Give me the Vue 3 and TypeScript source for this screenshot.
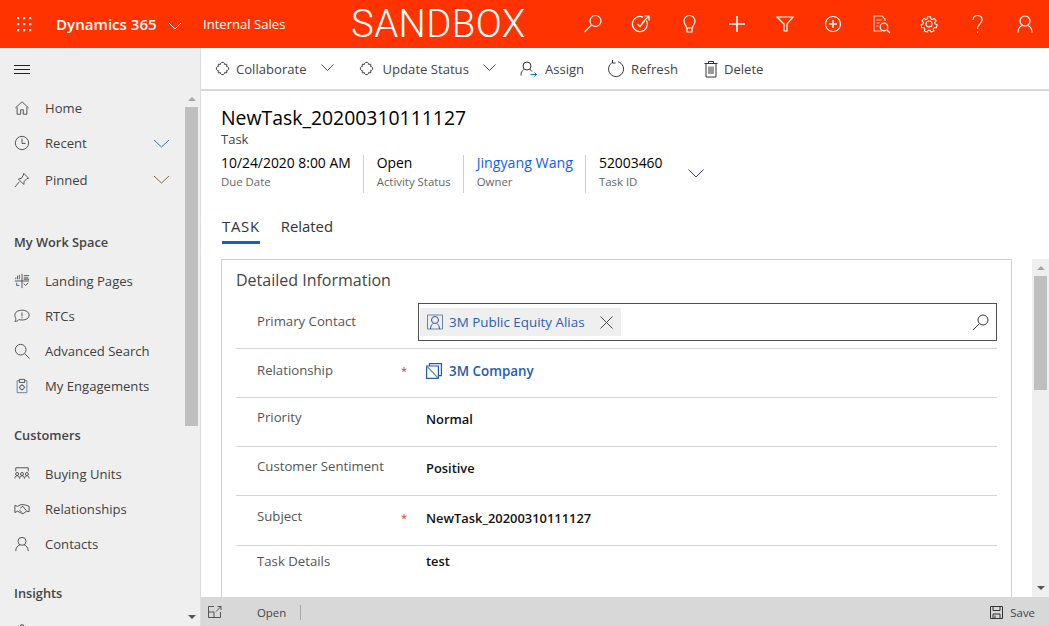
<template>
  <div class="app">
    <header class="topbar">
      <svg class="waffle" width="16" height="16" viewBox="0 0 16 16" fill="#fff">
        <template v-for="y in [1, 7, 13]" :key="y">
          <rect v-for="x in [1, 7, 13]" :key="x" :x="x" :y="y" width="2.2" height="2.2" />
        </template>
      </svg>
      <span class="brand">Dynamics 365</span>
      <svg class="brand-chev" width="14" height="8" viewBox="0 0 14 8" fill="none" stroke="#fff"><path d="M1 1l6 6 6-6" /></svg>
      <span class="app-name">Internal Sales</span>
      <span class="sandbox">SANDBOX</span>
      <div class="top-icons">
        <span class="top-icon">
          <svg viewBox="0 0 20 20"><circle cx="12.5" cy="7" r="5.5" /><path d="M8.5 11l-7 7" /></svg>
        </span>
        <span class="top-icon">
          <svg viewBox="0 0 20 20"><path d="M15.5 6.5A7.5 7.5 0 1 1 12 3.2" /><path d="M6.5 10l2.5 2.5L13.5 7" /><path d="M11 9l7-7M13.5 2H18v4.5" /></svg>
        </span>
        <span class="top-icon">
          <svg viewBox="0 0 20 20"><path d="M7.5 14c0-3-2.5-3.5-2.5-7a5.5 5.5 0 0 1 11 0c0 3.5-2.5 4-2.5 7z" /><path d="M8 14v4h5v-4" /></svg>
        </span>
        <span class="top-icon">
          <svg viewBox="0 0 20 20"><path d="M10 2v16M2 10h16" stroke-width="1.6" /></svg>
        </span>
        <span class="top-icon">
          <svg viewBox="0 0 20 20"><path d="M2 3h16l-6 7v7H9v-7z" /></svg>
        </span>
        <span class="top-icon">
          <svg viewBox="0 0 20 20"><circle cx="10" cy="10" r="7.5" /><path d="M10 6v8M6 10h8" stroke-width="1.4" /></svg>
        </span>
        <span class="top-icon">
          <svg viewBox="0 0 20 20"><path d="M11 17H3V2h8l3 3v2" opacity=".75" /><path d="M5.5 6h5M5.5 9h3M5.5 12h2" opacity=".75" /><circle cx="13" cy="13" r="3.8" /><path d="M16 16l3 3" /></svg>
        </span>
        <span class="top-icon">
          <svg viewBox="0 0 20 20"><path d="M8.3 2h3.4l.5 2.4 1.5.7 2.2-1.2 2 2.4-1.500 2 .4 1.600 2.200 1-.7 3.200-2.500-.1-1 1.300.6 2.400-3 1.300-1.400-2H9.200l-1.400 2-3-1.300.6-2.400-1-1.300-2.500.1-.7-3.200 2.200-1 .4-1.600-1.500-2 2-2.400 2.200 1.200 1.500-.7z" transform="translate(1 1) scale(.9)" /><circle cx="10" cy="10" r="3" /></svg>
        </span>
        <span class="top-icon">
          <svg viewBox="0 0 20 20"><path d="M6 6c0-6 9-6 9 0 0 4-4.5 4-4.5 9" /><path d="M10.5 17.5v1.200" /></svg>
        </span>
        <span class="top-icon">
          <svg viewBox="0 0 20 20"><circle cx="10" cy="7" r="5" /><path d="M3 18.5c0-5 3-6.500 4-7M17 18.500c0-5-3-6.500-4-7" /></svg>
        </span>
      </div>
    </header>

    <div class="body">
      <aside class="sidebar">
        <div class="hamburger">
          <svg width="16" height="10" viewBox="0 0 16 10" stroke="#222"><path d="M0 .5h16M0 4.500h16M0 8.500h16" /></svg>
        </div>
        <div class="nav-wrap">
          <nav class="nav">
            <div class="nav-item home">
              <svg class="nav-icon" viewBox="0 0 18 18"><path d="M1.5 9L9 2l7.5 7M3.5 8v8h4v-5h3v5h4V8" /></svg>
              <span>Home</span>
            </div>
            <div class="nav-item recent">
              <svg class="nav-icon" viewBox="0 0 18 18"><circle cx="9" cy="9" r="7.5" /><path d="M9 4v5.500h4" /></svg>
              <span>Recent</span>
              <svg class="nav-chev" width="17" height="9" viewBox="0 0 17 9"><path d="M1 1l7.5 7L16 1" /></svg>
            </div>
            <div class="nav-item pinned">
              <svg class="nav-icon" viewBox="0 0 18 18"><path d="M11 1.500l5.500 5.500-2 .5-3 3-.5 3.500-6-6L8.500 7l2-3.500zM6 11l-5 6" /></svg>
              <span>Pinned</span>
              <svg class="nav-chev" width="17" height="9" viewBox="0 0 17 9"><path d="M1 1l7.500 7L16 1" /></svg>
            </div>

            <div class="nav-head workspace">My Work Space</div>
            <div class="nav-item">
              <svg class="nav-icon" viewBox="0 0 18 18"><path d="M9 1v16M1 9h16M11 3h6M11 5.500h5M11 7h6M11 12l2 2 3-3" /><path d="M2 7V5M4 7V3M6 7V2M3 11v3h3" stroke="#2b579a" /></svg>
              <span>Landing Pages</span>
            </div>
            <div class="nav-item">
              <svg class="nav-icon" viewBox="0 0 18 18"><path d="M1 15c1.200-1.500 1-2.500 1-3.500C1 10 1 9 1 8c0-3.500 3.500-5.500 8-5.500S17 4.500 17 8s-3.500 5.500-8 5.500c-1.500 0-2.500-.2-3.500-.5-1 1.500-2.500 2-4.500 2z" /><path d="M9 5v4.500M9 10.500v1.200" /></svg>
              <span>RTCs</span>
            </div>
            <div class="nav-item">
              <svg class="nav-icon" viewBox="0 0 18 18"><circle cx="7.5" cy="7.5" r="6" /><path d="M12 12l5.500 5.500" /></svg>
              <span>Advanced Search</span>
            </div>
            <div class="nav-item">
              <svg class="nav-icon" viewBox="0 0 18 18"><path d="M6 3H3.500v13.500h11V3H12" stroke="#5b7b9a" /><path d="M6 1.500h6V5H6z" /><circle cx="9" cy="10.500" r="2.500" /><path d="M9 7v1M9 13v1M5.500 10.500h1M11.500 10.500h1" /></svg>
              <span>My Engagements</span>
            </div>

            <div class="nav-head customers">Customers</div>
            <div class="nav-item">
              <svg class="nav-icon" viewBox="0 0 18 18"><path d="M2 6V2h14v4" /><circle cx="3.500" cy="9" r="1.700" /><circle cx="9" cy="9" r="1.700" /><circle cx="14.500" cy="9" r="1.700" /><path d="M1 14c0-2 1-3 2.500-3S6 12 6 14M6.500 14c0-2 1-3 2.500-3s2.500 1 2.500 3M12 14c0-2 1-3 2.500-3s2.500 1 2.500 3" /></svg>
              <span>Buying Units</span>
            </div>
            <div class="nav-item">
              <svg class="nav-icon" viewBox="0 0 18 18"><path d="M1 5l3 1 4-2 5 .5L17 6v6l-3-.5-4 3-3-1.500L4 11.500 1 13z" /><path d="M7 8l3-2 4 5M9 13l-3-3" /></svg>
              <span>Relationships</span>
            </div>
            <div class="nav-item">
              <svg class="nav-icon" viewBox="0 0 18 18"><circle cx="9" cy="6" r="4.500" /><path d="M2 17c0-4 2-6 4.500-7M16 17c0-4-2-6-4.500-7" /></svg>
              <span>Contacts</span>
            </div>

            <div class="nav-head insights">Insights</div>
            <div class="nav-item">
              <svg class="nav-icon" viewBox="0 0 18 18"><path d="M7.500 1h3l.5 2.500 2.200-1.200 2 2L14 6.500l2.500.5v3L14 10.500l1.200 2.200-2 2L11 13.500l-.5 2.500h-3L7 13.500l-2.200 1.200-2-2L4 10.500 1.500 10V7L4 6.500 2.800 4.300l2-2L7 3.500z" /><circle cx="9" cy="8.500" r="2.500" /></svg>
            </div>
          </nav>
          <div class="side-scroll">
            <span class="arrow up"></span>
            <span class="thumb side-thumb"></span>
            <span class="arrow down"></span>
          </div>
        </div>
      </aside>

      <main class="main">
        <div class="commands">
          <div class="cmd">
            <svg class="cmd-icon" viewBox="0 0 16 16"><path d="M3.500 3.500H6v-1l1-1h2l1 1v1h2.500V6h1l1 1v2l-1 1h-1v2.500H10v1l-1 1H7l-1-1v-1H3.500V10h-1l-1-1V7l1-1h1z" /></svg>
            <span>Collaborate</span>
            <svg class="cmd-chev" width="13" height="7" viewBox="0 0 13 7"><path d="M.5.500l6 6 6-6" /></svg>
          </div>
          <div class="cmd update">
            <svg class="cmd-icon" viewBox="0 0 16 16"><path d="M3.500 3.500H6v-1l1-1h2l1 1v1h2.500V6h1l1 1v2l-1 1h-1v2.500H10v1l-1 1H7l-1-1v-1H3.500V10h-1l-1-1V7l1-1h1z" /></svg>
            <span>Update Status</span>
            <svg class="cmd-chev" width="13" height="7" viewBox="0 0 13 7"><path d="M.5.500l6 6 6-6" /></svg>
          </div>
          <div class="cmd assign">
            <svg class="cmd-icon wide" viewBox="0 0 18 16"><circle cx="7" cy="5" r="4" /><path d="M1 14.500c0-4 1.500-5 3-6M10 8.500c1 .6 1.500 1.200 2 2" /><path d="M10.500 13.500h6M14.500 11.500l2 2-2 2" stroke="#106ebe" /></svg>
            <span>Assign</span>
          </div>
          <div class="cmd refresh">
            <svg class="cmd-icon big" viewBox="0 0 18 18"><path d="M6 2.200A7.500 7.500 0 1 0 11 1.800" /><path d="M5.500 0v3h3" /></svg>
            <span>Refresh</span>
          </div>
          <div class="cmd delete">
            <svg class="cmd-icon big del" viewBox="0 0 18 18"><path d="M2.500 3.500h13M6.500 3.500v-2h5v2M4 3.500v13.500h10V3.500M7 6.500V14M9 6.500V14M11 6.500V14" /></svg>
            <span>Delete</span>
          </div>
        </div>

        <div class="scroll-area">
          <div class="content">
            <div class="record-head">
              <h1 class="title">NewTask_20200310111127</h1>
              <div class="entity">Task</div>
              <div class="summary">
                <div class="sum-item" v-for="s in summary" :key="s.label">
                  <div class="sum-value" :class="{ link: s.link }">{{ s.value }}</div>
                  <div class="sum-label">{{ s.label }}</div>
                </div>
                <svg class="sum-chev" width="16" height="9" viewBox="0 0 16 9"><path d="M.5.500l7.500 7.500L15.500.5" /></svg>
              </div>
            </div>

            <div class="tabs">
              <div class="tab active">TASK</div>
              <div class="tab">Related</div>
            </div>

            <section class="card">
              <h2 class="card-title">Detailed Information</h2>
              <div class="row contact-row">
                <div class="row-label">Primary Contact</div>
                <div class="lookup">
                  <div class="chip">
                    <svg width="16" height="16" viewBox="0 0 16 16" fill="none" stroke="#2b579a"><path d="M.5 1h15v14H.5z" stroke="#6b83a8" /><circle cx="8" cy="6" r="3.500" /><path d="M3.500 15c0-3 1.500-4.500 2.500-5.500M12.500 15c0-3-1.500-4.500-2.500-5.500" /></svg>
                    <span>3M Public Equity Alias</span>
                    <svg class="chip-x" width="13" height="13" viewBox="0 0 13 13" stroke="#444"><path d="M.5.500l12 12M12.500.5l-12 12" /></svg>
                  </div>
                  <svg width="17" height="17" viewBox="0 0 17 17" fill="none" stroke="#333"><circle cx="11" cy="6" r="5" /><path d="M7.500 9.500L1 16" /></svg>
                </div>
              </div>
              <div class="row" v-for="r in rows" :key="r.label" :class="r.cls">
                <div class="row-label">{{ r.label }}<span v-if="r.required" class="req">*</span></div>
                <div class="row-value" :class="{ company: r.company }">
                  <svg v-if="r.company" width="16" height="16" viewBox="0 0 16 16" fill="none" stroke="#1f5bb0" stroke-width="1.200"><path d="M.6 3h11.800v12.400H.6z" /><path d="M3.500 3V.6h11.900v12H12.400" /><path d="M.6 3l11.800 12.400" stroke="#6b83a8" /></svg>
                  <span>{{ r.value }}</span>
                </div>
              </div>
            </section>
          </div>
          <div class="main-scroll">
            <span class="arrow up"></span>
            <span class="thumb main-thumb"></span>
            <span class="spacer"></span>
            <span class="arrow down"></span>
          </div>
        </div>

        <footer class="status">
          <svg class="open-icon" width="14" height="12" viewBox="0 0 14 12" fill="none" stroke="#555"><path d="M6 .5H.5v11h12V6M.5 6H6v5.500M8 5.500L13 .5M9.500.5H13V4" /></svg>
          <span class="status-open">Open</span>
          <span class="status-sep"></span>
          <span class="spacer"></span>
          <svg width="13" height="13" viewBox="0 0 13 13" fill="none" stroke="#333"><path d="M.5.500h12v12H.5z" /><path d="M3 .5v4h7v-4M3 12.500V8h7v4.500M5 9.500v3" /></svg>
          <span class="status-save">Save</span>
        </footer>
      </main>
    </div>
  </div>
</template>

<script setup lang="ts">
interface SummaryItem {
  value: string;
  label: string;
  link?: boolean;
}

interface FormRow {
  label: string;
  value: string;
  required?: boolean;
  company?: boolean;
  cls: string;
}

const summary: SummaryItem[] = [
  { value: "10/24/2020 8:00 AM", label: "Due Date" },
  { value: "Open", label: "Activity Status" },
  { value: "Jingyang Wang", label: "Owner", link: true },
  { value: "52003460", label: "Task ID" },
];

const rows: FormRow[] = [
  { label: "Relationship", value: "3M Company", required: true, company: true, cls: "r-rel" },
  { label: "Priority", value: "Normal", cls: "r-pri" },
  { label: "Customer Sentiment", value: "Positive", cls: "r-sent" },
  { label: "Subject", value: "NewTask_20200310111127", required: true, cls: "r-sub" },
  { label: "Task Details", value: "test", cls: "r-det" },
];
</script>

<style>
html,
body {
  margin: 0;
  height: 100%;
  overflow: hidden;
  background: #fff;
}
</style>

<style scoped>
.app {
  width: 1049px;
  height: 626px;
  display: flex;
  flex-direction: column;
  overflow: hidden;
  font-family: "Open Sans", "Noto Sans", sans-serif;
  font-size: 13.1px;
  color: #333;
}

svg {
  flex: none;
  display: block;
}

.topbar {
  height: 48px;
  flex: none;
  display: flex;
  align-items: center;
  background: #ff3300;
  color: #fff;
  position: relative;
}

.waffle {
  margin-left: 16px;
}

.brand {
  margin-left: 24px;
  font-size: 15.1px;
  font-weight: 600;
  width: 101px;
  white-space: nowrap;
}

.brand-chev {
  margin-left: 11px;
  margin-top: 3px;
}

.app-name {
  margin-left: 21px;
  font-size: 13.1px;
  white-space: nowrap;
  width: 120px;
}

.sandbox {
  font-family: Roboto, "Open Sans", sans-serif;
  font-size: 38.4px;
  font-weight: 300;
  line-height: 46px;
  white-space: nowrap;
  margin-left: 28px;
  letter-spacing: 0.4px;
}

.top-icons {
  position: absolute;
  left: 569px;
  top: 0;
  display: flex;
}

.top-icon {
  width: 48px;
  height: 48px;
  display: flex;
  align-items: center;
  justify-content: center;
}

.top-icon svg {
  width: 20px;
  height: 20px;
  fill: none;
  stroke: #fff;
  stroke-width: 1.2;
}

.body {
  flex: 1;
  min-height: 0;
  display: flex;
}

.sidebar {
  width: 201px;
  flex: none;
  background: #efefef;
  border-right: 1px solid #dcdcdc;
  box-sizing: border-box;
  display: flex;
  flex-direction: column;
  overflow: hidden;
}

.hamburger {
  height: 42px;
  flex: none;
  padding: 17px 0 0 14px;
  box-sizing: border-box;
}

.nav-wrap {
  flex: 1;
  min-height: 0;
  display: flex;
}

.nav {
  flex: 1;
  min-width: 0;
  overflow: hidden;
  color: #3f3f3f;
}

.nav-item {
  height: 35px;
  display: flex;
  align-items: center;
  padding-left: 14px;
  white-space: nowrap;
}

.nav-item.home {
  height: 36px;
}

.nav-item.recent {
  height: 34px;
}

.nav-item.pinned {
  height: 39px;
}

.nav-item span {
  margin-left: 15px;
}

.nav-icon {
  width: 16px;
  height: 16px;
  fill: none;
  stroke: #444;
  stroke-width: 1;
}

.nav-chev {
  margin-left: auto;
  margin-right: 15px;
  fill: none;
  stroke: #3a6ea8;
}

.pinned .nav-chev {
  stroke: #7a6a55;
}

.nav-head {
  padding-left: 14px;
  font-size: 12.8px;
  font-weight: 600;
  color: #444;
  height: 20px;
  line-height: 20px;
}

.workspace {
  margin-top: 33px;
  margin-bottom: 11px;
}

.customers {
  margin-top: 22px;
  margin-bottom: 11px;
}

.insights {
  margin-top: 22px;
  margin-bottom: 11px;
}

.side-scroll {
  width: 13px;
  margin-right: 2px;
  flex: none;
  display: flex;
  flex-direction: column;
  align-items: center;
}

.arrow {
  width: 0;
  height: 0;
  flex: none;
  border-left: 4px solid transparent;
  border-right: 4px solid transparent;
}

.arrow.up {
  border-bottom: 4px solid #a6a6a6;
  margin: 7px 0 6px;
}

.arrow.down {
  border-top: 4px solid #555;
  margin: 5px 0 7px;
}

.thumb {
  background: #bfbfbf;
  flex: none;
}

.side-thumb {
  width: 100%;
  height: 319px;
  margin-bottom: auto;
}

.main {
  flex: 1;
  min-width: 0;
  display: flex;
  flex-direction: column;
}

.commands {
  height: 43px;
  flex: none;
  box-sizing: border-box;
  border-bottom: 2px solid #d8d8d8;
  display: flex;
  align-items: center;
  padding-left: 14px;
  font-size: 13.1px;
  color: #444;
  white-space: nowrap;
}

.cmd {
  display: flex;
  align-items: center;
}

.cmd-icon {
  width: 15px;
  height: 15px;
  fill: none;
  stroke: #333;
  stroke-width: 1;
  margin-right: 6px;
}

.cmd-icon.wide {
  width: 18px;
  height: 16px;
  margin-right: 7px;
}

.cmd-icon.big {
  width: 18px;
  height: 18px;
  margin-right: 6px;
}

.cmd-icon.del {
  margin-right: 4px;
}

.cmd-chev {
  margin-left: 14px;
  margin-bottom: 3px;
  fill: none;
  stroke: #555;
}

.update {
  margin-left: 25px;
}

.update .cmd-icon {
  margin-right: 9px;
}

.assign,
.delete {
  margin-left: 24px;
}

.refresh {
  margin-left: 23px;
}

.scroll-area {
  flex: 1;
  min-height: 0;
  display: flex;
  overflow: hidden;
}

.content {
  flex: 1;
  min-width: 0;
  padding-left: 20px;
}

.record-head {
  padding-top: 14px;
}

.title {
  margin: 0;
  font-size: 19.4px;
  line-height: 25px;
  font-weight: 500;
  color: #000;
}

.entity {
  font-size: 13px;
  line-height: 18px;
  color: #444;
}

.summary {
  display: flex;
  align-items: flex-start;
  margin-top: 7px;
  height: 38px;
}

.sum-item {
  border-left: 1px solid #d0d0d0;
  padding: 0 12px 0 13px;
  height: 38px;
  white-space: nowrap;
}

.sum-item:first-child {
  border-left: 0;
  padding-left: 0;
}

.sum-value {
  font-size: 13.9px;
  line-height: 16px;
  font-weight: 500;
  color: #000;
}

.sum-value.link {
  font-size: 14.2px;
  color: #1160f0;
}

.sum-label {
  font-size: 11.4px;
  line-height: 21px;
  color: #666;
}

.sum-chev {
  margin: 14px 0 0 13px;
  fill: none;
  stroke: #4b2a6b;
}

.tabs {
  display: flex;
  gap: 21px;
  margin: 20px 0 0 1px;
  height: 46px;
}

.tab {
  font-size: 14.9px;
  line-height: 26px;
  height: 31px;
  color: #333;
  box-sizing: border-box;
}

.tab.active {
  letter-spacing: 0.7px;
  border-bottom: 3px solid #1160d0;
}

.card {
  width: 791px;
  height: 400px;
  box-sizing: border-box;
  border: 1px solid #d0d0d0;
  padding: 0 14px;
}

.card-title {
  margin: 0;
  font-size: 16px;
  font-weight: 400;
  line-height: 20px;
  padding-top: 10px;
  color: #444;
}

.row {
  display: flex;
  height: 49px;
  box-sizing: border-box;
  border-bottom: 1px solid #d4d4d4;
}

.contact-row {
  height: 59px;
  padding-top: 13px;
}

.row-label {
  width: 182px;
  padding-left: 21px;
  padding-top: 10px;
  box-sizing: border-box;
  position: relative;
  white-space: nowrap;
  font-size: 13.2px;
  color: #555;
  line-height: 18px;
}

.contact-row .row-label {
  padding-top: 9px;
}

.req {
  position: absolute;
  left: 165px;
  top: 13px;
  color: #d13438;
  font-size: 11px;
}

.row-value {
  display: flex;
  align-items: flex-start;
  gap: 7px;
  font-size: 12.9px;
  font-weight: 600;
  color: #111;
  padding: 12px 0 0 8px;
  line-height: 18px;
}

.row-value.company {
  font-size: 13.4px;
  color: #1f5bb0;
}

.row-value.company svg {
  margin-top: 1px;
}

.r-rel .row-label {
  padding-top: 12px;
}

.r-rel .row-value {
  padding-top: 13px;
}

.r-sub {
  height: 50px;
}

.r-sub .row-label {
  padding-top: 11px;
}

.r-sub .row-value {
  padding-top: 13px;
}

.r-det {
  border-bottom: 0;
}

.r-det .row-label,
.r-det .row-value {
  padding-top: 6px;
}

.lookup {
  width: 579px;
  height: 38px;
  box-sizing: border-box;
  border: 1px solid #505050;
  display: flex;
  align-items: center;
  padding: 0 7px 0 1px;
  justify-content: space-between;
}

.chip {
  height: 28px;
  width: 201px;
  box-sizing: border-box;
  background: #efefef;
  display: flex;
  align-items: center;
  padding: 0 8px 0 7px;
  color: #2b5fb3;
  font-size: 13.4px;
  white-space: nowrap;
}

.chip span {
  margin-left: 6px;
}

.chip-x {
  margin-left: 15px;
}

.main-scroll {
  width: 17px;
  flex: none;
  margin-top: 168px;
  background: #efefef;
  display: flex;
  flex-direction: column;
  align-items: center;
}

.main-thumb {
  width: 13px;
  height: 114px;
}

.spacer {
  flex: 1;
}

.status {
  height: 29px;
  flex: none;
  box-sizing: border-box;
  padding: 1px 14px 0 0;
  background: #d8d8d8;
  display: flex;
  align-items: center;
  color: #444;
  font-size: 11.4px;
}

.open-icon {
  margin-left: 7px;
}

.status-open {
  margin-left: 35px;
}

.status-sep {
  width: 1px;
  height: 15px;
  background: #a8a8a8;
  margin-left: 14px;
}

.status-save {
  margin-left: 7px;
}
</style>
